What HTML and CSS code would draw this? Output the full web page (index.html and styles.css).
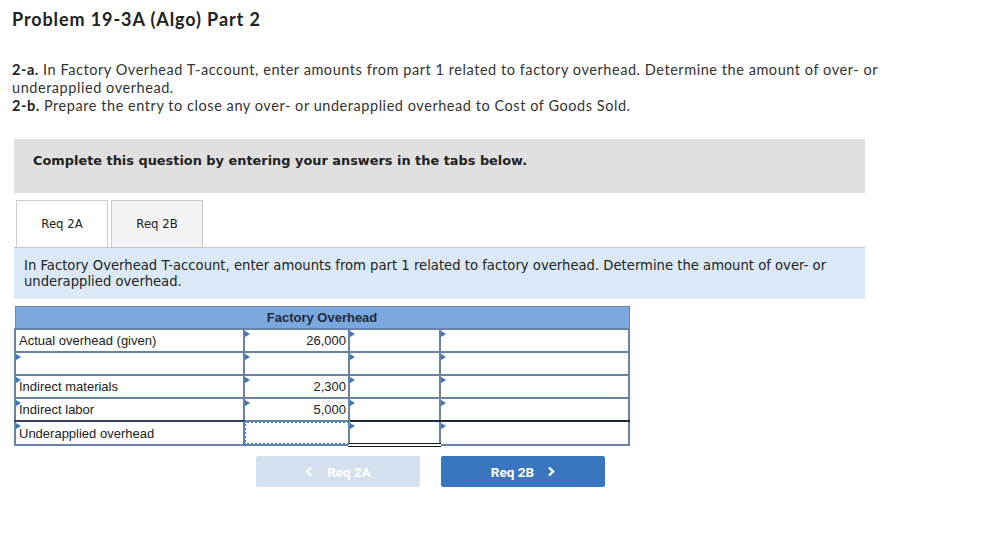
FILE: index.html
```html
<!DOCTYPE html>
<html>
<head>
<meta charset="utf-8">
<link rel="stylesheet" href="styles.css">
</head>
<body>
<div class="page">
  <h1 class="title">Problem 19-3A (Algo) Part 2</h1>
  <div class="intro">
    <p><b>2-a.</b> In Factory Overhead T-account, enter amounts from part 1 related to factory overhead. Determine the amount of over- or underapplied overhead.</p>
    <p><b>2-b.</b> Prepare the entry to close any over- or underapplied overhead to Cost of Goods Sold.</p>
  </div>
  <div class="notice">Complete this question by entering your answers in the tabs below.</div>
  <div class="tabs">
    <div class="tab active">Req 2A</div>
    <div class="tab">Req 2B</div>
  </div>
  <div class="info">In Factory Overhead T-account, enter amounts from part 1 related to factory overhead. Determine the amount of over- or underapplied overhead.</div>
  <table class="taccount">
    <colgroup>
      <col class="c1"><col class="c2"><col class="c3"><col class="c4">
    </colgroup>
    <thead>
      <tr><th colspan="4">Factory Overhead</th></tr>
    </thead>
    <tbody>
      <tr>
        <td class="lbl">Actual overhead (given)</td>
        <td class="num dd">26,000</td>
        <td class="mid dd"></td>
        <td class="dd"></td>
      </tr>
      <tr>
        <td class="lbl dd"></td>
        <td class="num dd"></td>
        <td class="mid dd"></td>
        <td class="dd"></td>
      </tr>
      <tr>
        <td class="lbl dd">Indirect materials</td>
        <td class="num dd">2,300</td>
        <td class="mid dd"></td>
        <td class="dd"></td>
      </tr>
      <tr class="pre-total">
        <td class="lbl dd">Indirect labor</td>
        <td class="num dd">5,000</td>
        <td class="mid dd"></td>
        <td class="dd"></td>
      </tr>
      <tr class="total">
        <td class="lbl dd">Underapplied overhead</td>
        <td class="num dotted"></td>
        <td class="mid dd dbl"></td>
        <td class="dd"></td>
      </tr>
    </tbody>
  </table>
  <div class="nav">
    <button class="btn prev"><svg class="chev" width="8" height="11" viewBox="0 0 8 11"><polyline points="6,1.5 2,5.5 6,9.5" fill="none" stroke="currentColor" stroke-width="2.4"/></svg>Req 2A</button>
    <button class="btn next">Req 2B<svg class="chev" width="8" height="11" viewBox="0 0 8 11"><polyline points="2,1.5 6,5.5 2,9.5" fill="none" stroke="currentColor" stroke-width="2.4"/></svg></button>
  </div>
</div>
</body>
</html>
```
FILE: styles.css
```css
html, body {
  margin: 0;
  padding: 0;
  background: #ffffff;
}
.page {
  padding: 8px 0 0 12px;
  width: 890px;
}
.title {
  margin: 0;
  font-family: Lato, "Open Sans", sans-serif;
  font-weight: 700;
  font-size: 18px;
  letter-spacing: 0.9px;
  line-height: 22px;
  color: #222222;
}
.intro {
  margin-top: 31px;
  font-family: Lato, "Open Sans", sans-serif;
  font-size: 14.5px;
  letter-spacing: 0.55px;
  line-height: 18px;
  color: #333333;
}
.intro p {
  margin: 0;
}
.intro b {
  color: #222222;
}
.notice {
  margin: 24px 0 0 2px;
  height: 54px;
  box-sizing: border-box;
  padding: 14px 0 0 19px;
  width: 851px;
  background: #e0e0e0;
  font-family: "DejaVu Sans", Verdana, sans-serif;
  font-weight: 700;
  font-size: 12.9px;
  line-height: 16px;
  color: #222222;
}
.tabs {
  display: flex;
  gap: 3px;
  margin: 7px 0 0 4px;
}
.tab {
  width: 92px;
  height: 47px;
  box-sizing: border-box;
  border: 1px solid #cccccc;
  border-bottom: none;
  background: #f3f3f3;
  font-family: "DejaVu Sans", Verdana, sans-serif;
  font-size: 11.7px;
  line-height: 46px;
  text-align: center;
  color: #222222;
}
.tab.active {
  background: #ffffff;
}
.info {
  margin: 0 0 0 2px;
  width: 851px;
  box-sizing: border-box;
  border-top: 1px solid #bfc8d2;
  padding: 10px 12px 9px 10px;
  background: #dbe9f7;
  font-family: "DejaVu Sans", Verdana, sans-serif;
  font-size: 13.2px;
  line-height: 16px;
  color: #222222;
}
.taccount {
  margin: 7px 0 0 2px;
  border-collapse: collapse;
  table-layout: fixed;
  width: 614px;
  font-family: "Liberation Sans", Arial, sans-serif;
  font-size: 13px;
  color: #222222;
}
.c1 { width: 229px; }
.c2 { width: 105px; }
.c3 { width: 91px; }
.c4 { width: 189px; }
.taccount th {
  height: 21px;
  padding: 0;
  background: #7aa8de;
  border: 1px solid #6a86a8;
  font-weight: 700;
  font-size: 13px;
  text-align: center;
  color: #1f2a3a;
}
.taccount td {
  position: relative;
  height: 21px;
  padding: 0 3px;
  border: 2px solid #6783a6;
  background: #ffffff;
  white-space: nowrap;
}
.taccount td.num {
  text-align: right;
  padding-right: 2px;
}
.taccount td.mid {
  border-left: 2px solid #1f2b3d;
}
.taccount tr.pre-total td.mid,
.taccount tr.pre-total td.mid + td {
  border-bottom-color: #1f2b3d;
}
.taccount tr.pre-total td.lbl {
  border-bottom-color: #33425a;
}
.taccount td.dotted::after {
  content: "";
  position: absolute;
  left: -1px;
  top: -1px;
  right: -1px;
  bottom: -1px;
  border: 2px dotted #4a7fbf;
  border-right: none;
}
.taccount td.dbl {
  border-bottom: 4px double #1a1a1a;
}
.taccount td.dd::before {
  content: "";
  position: absolute;
  left: 0;
  top: 1px;
  width: 0;
  height: 0;
  border-top: 3px solid transparent;
  border-bottom: 3px solid transparent;
  border-left: 5px solid #3c76bd;
}
.nav {
  display: flex;
  gap: 21px;
  margin: 9px 0 0 244px;
}
.btn {
  display: flex;
  align-items: center;
  justify-content: center;
  gap: 13px;
  width: 164px;
  height: 31px;
  border: none;
  border-radius: 2px;
  font-family: Roboto, "Liberation Sans", sans-serif;
  font-weight: 700;
  font-size: 13.5px;
  color: #ffffff;
  padding: 0;
}
.btn.prev {
  background: #d5e0ee;
  gap: 14px;
}
.btn.next {
  background: #3a76bf;
}
```
